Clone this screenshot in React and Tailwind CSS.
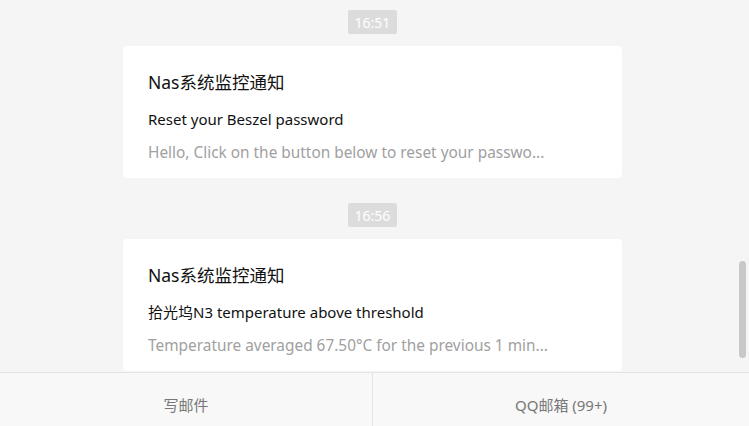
const messages = [
  {
    time: '16:51',
    title: 'Nas系统监控通知',
    subject: 'Reset your Beszel password',
    preview: 'Hello, Click on the button below to reset your passwo...',
  },
  {
    time: '16:56',
    title: 'Nas系统监控通知',
    subject: '拾光坞N3 temperature above threshold',
    preview: 'Temperature averaged 67.50°C for the previous 1 min...',
  },
];

const font = { fontFamily: '"Noto Sans", "Noto Sans CJK SC", sans-serif' };

const MessageBlock = ({ msg }) => {
  return (
    <div className="flex flex-col items-center">
      <div className="h-[24px] w-[49px] flex items-center justify-center bg-[#dcdcdc] text-white text-[14px] rounded-[2px]">
        {msg.time}
      </div>
      <div className="mt-[12px] w-[499px] bg-white rounded-[4px] pl-[25px] pr-[20px] pt-[24px] pb-[14px]">
        <div className="text-[17.5px] leading-[24px] text-[#111]">{msg.title}</div>
        <div className="mt-[14px] text-[15px] leading-[22px] text-[#111]">{msg.subject}</div>
        <div className="mt-[12px] text-[15.4px] leading-[22px] text-[#a0a0a0] whitespace-nowrap">{msg.preview}</div>
      </div>
    </div>
  );
};

const App = () => {
  return (
    <div className="h-screen w-full flex flex-col bg-[#f5f5f5] overflow-hidden" style={font}>
      <div className="relative flex-1 overflow-hidden pr-[4px]">
        <div className="flex flex-col gap-[25px] pt-[10px]">
          {messages.map((m) => (
            <MessageBlock key={m.time} msg={m} />
          ))}
        </div>
        {/* scrollbar thumb */}
        <div className="absolute left-[739px] top-[261px] h-[97px] w-[7px] rounded-full bg-[#c8c8c8]" />
      </div>
      <div className="h-[54px] flex border-t border-[#e4e4e4] bg-[#f8f8f8] text-[15px] leading-[20px] text-[#777]">
        <div className="w-[373px] flex justify-center pt-[22px] border-r border-[#e4e4e4]">写邮件</div>
        <div className="flex-1 flex justify-center pt-[22px]">QQ邮箱 (99+)</div>
      </div>
    </div>
  );
};

export default App;
